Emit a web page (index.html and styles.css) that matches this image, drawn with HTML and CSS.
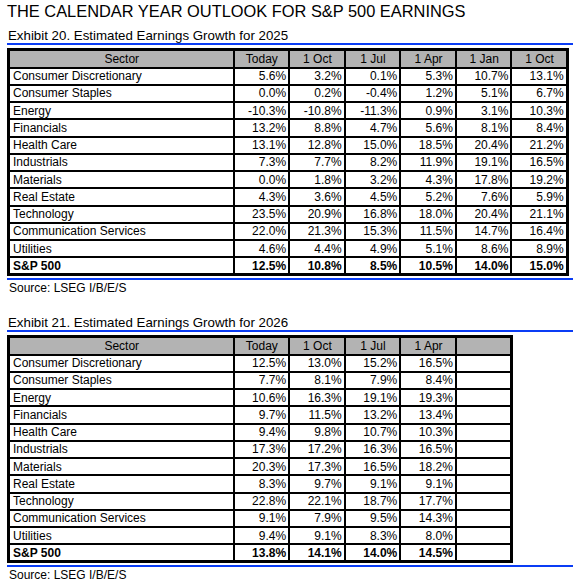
FILE: index.html
```html
<!DOCTYPE html>
<html>
<head>
<meta charset="utf-8">
<link rel="stylesheet" href="styles.css">
</head>
<body>
<div class="page">
  <h1 class="title">THE CALENDAR YEAR OUTLOOK FOR S&amp;P 500 EARNINGS</h1>

  <section class="exhibit">
    <h2 class="ex-title">Exhibit 20. Estimated Earnings Growth for 2025</h2>
    <table class="grid">
      <colgroup><col class="c-sector"><col class="c-num"><col class="c-num"><col class="c-num"><col class="c-num"><col class="c-num"><col class="c-num"></colgroup>
      <thead>
        <tr><th>Sector</th><th>Today</th><th>1 Oct</th><th>1 Jul</th><th>1 Apr</th><th>1 Jan</th><th>1 Oct</th></tr>
      </thead>
      <tbody>
        <tr><td>Consumer Discretionary</td><td>5.6%</td><td>3.2%</td><td>0.1%</td><td>5.3%</td><td>10.7%</td><td>13.1%</td></tr>
        <tr><td>Consumer Staples</td><td>0.0%</td><td>0.2%</td><td>-0.4%</td><td>1.2%</td><td>5.1%</td><td>6.7%</td></tr>
        <tr><td>Energy</td><td>-10.3%</td><td>-10.8%</td><td>-11.3%</td><td>0.9%</td><td>3.1%</td><td>10.3%</td></tr>
        <tr><td>Financials</td><td>13.2%</td><td>8.8%</td><td>4.7%</td><td>5.6%</td><td>8.1%</td><td>8.4%</td></tr>
        <tr><td>Health Care</td><td>13.1%</td><td>12.8%</td><td>15.0%</td><td>18.5%</td><td>20.4%</td><td>21.2%</td></tr>
        <tr><td>Industrials</td><td>7.3%</td><td>7.7%</td><td>8.2%</td><td>11.9%</td><td>19.1%</td><td>16.5%</td></tr>
        <tr><td>Materials</td><td>0.0%</td><td>1.8%</td><td>3.2%</td><td>4.3%</td><td>17.8%</td><td>19.2%</td></tr>
        <tr><td>Real Estate</td><td>4.3%</td><td>3.6%</td><td>4.5%</td><td>5.2%</td><td>7.6%</td><td>5.9%</td></tr>
        <tr><td>Technology</td><td>23.5%</td><td>20.9%</td><td>16.8%</td><td>18.0%</td><td>20.4%</td><td>21.1%</td></tr>
        <tr><td>Communication Services</td><td>22.0%</td><td>21.3%</td><td>15.3%</td><td>11.5%</td><td>14.7%</td><td>16.4%</td></tr>
        <tr><td>Utilities</td><td>4.6%</td><td>4.4%</td><td>4.9%</td><td>5.1%</td><td>8.6%</td><td>8.9%</td></tr>
        <tr class="total"><td>S&amp;P 500</td><td>12.5%</td><td>10.8%</td><td>8.5%</td><td>10.5%</td><td>14.0%</td><td>15.0%</td></tr>
      </tbody>
    </table>
    <div class="rule"></div>
    <p class="source">Source: LSEG I/B/E/S</p>
  </section>

  <section class="exhibit second">
    <h2 class="ex-title">Exhibit 21. Estimated Earnings Growth for 2026</h2>
    <table class="grid">
      <colgroup><col class="c-sector"><col class="c-num"><col class="c-num"><col class="c-num"><col class="c-num"><col class="c-num"></colgroup>
      <thead>
        <tr><th>Sector</th><th>Today</th><th>1 Oct</th><th>1 Jul</th><th>1 Apr</th><th></th></tr>
      </thead>
      <tbody>
        <tr><td>Consumer Discretionary</td><td>12.5%</td><td>13.0%</td><td>15.2%</td><td>16.5%</td><td></td></tr>
        <tr><td>Consumer Staples</td><td>7.7%</td><td>8.1%</td><td>7.9%</td><td>8.4%</td><td></td></tr>
        <tr><td>Energy</td><td>10.6%</td><td>16.3%</td><td>19.1%</td><td>19.3%</td><td></td></tr>
        <tr><td>Financials</td><td>9.7%</td><td>11.5%</td><td>13.2%</td><td>13.4%</td><td></td></tr>
        <tr><td>Health Care</td><td>9.4%</td><td>9.8%</td><td>10.7%</td><td>10.3%</td><td></td></tr>
        <tr><td>Industrials</td><td>17.3%</td><td>17.2%</td><td>16.3%</td><td>16.5%</td><td></td></tr>
        <tr><td>Materials</td><td>20.3%</td><td>17.3%</td><td>16.5%</td><td>18.2%</td><td></td></tr>
        <tr><td>Real Estate</td><td>8.3%</td><td>9.7%</td><td>9.1%</td><td>9.1%</td><td></td></tr>
        <tr><td>Technology</td><td>22.8%</td><td>22.1%</td><td>18.7%</td><td>17.7%</td><td></td></tr>
        <tr><td>Communication Services</td><td>9.1%</td><td>7.9%</td><td>9.5%</td><td>14.3%</td><td></td></tr>
        <tr><td>Utilities</td><td>9.4%</td><td>9.1%</td><td>8.3%</td><td>8.0%</td><td></td></tr>
        <tr class="total"><td>S&amp;P 500</td><td>13.8%</td><td>14.1%</td><td>14.0%</td><td>14.5%</td><td></td></tr>
      </tbody>
    </table>
    <div class="rule"></div>
    <p class="source">Source: LSEG I/B/E/S</p>
  </section>
</div>
</body>
</html>
```
FILE: styles.css
```css
* { box-sizing: border-box; }
html, body { margin: 0; padding: 0; background: #fff; }
body {
  font-family: "Liberation Sans", Arial, sans-serif;
  color: #000;
}
.page {
  padding: 1px 0 0 7px;
}
.title {
  margin: 0;
  font-size: 16.4px;
  font-weight: normal;
  line-height: 20px;
}
.exhibit { margin-top: 7px; }
.exhibit.second { margin-top: 20px; }
.ex-title {
  margin: 0;
  font-size: 13.3px;
  font-weight: normal;
  line-height: 15px;
  padding-left: 1px;
  border-bottom: 2px solid #0a3cf5;
  margin-bottom: 3px;
}
.grid {
  border-collapse: collapse;
  table-layout: fixed;
  font-size: 12px;
  border: 3px solid #000;
}
.c-sector { width: 225px; }
.c-num { width: 55.6px; }
.grid th, .grid td {
  border: 2px solid #000;
  padding: 0 2px 0 3px;
  height: 17.25px;
  line-height: 14px;
  white-space: nowrap;
  overflow: hidden;
}
.grid th {
  background: #b3b3b3;
  font-weight: normal;
  text-align: center;
  height: 18px;
}
.grid td { text-align: right; }
.grid td:first-child { text-align: left; }
.grid .total td { font-weight: bold; }
.rule {
  height: 2px;
  background: #0a3cf5;
  margin-top: 2px;
}
.source {
  margin: 1px 0 0 2px;
  font-size: 12px;
  line-height: 14px;
}
```
